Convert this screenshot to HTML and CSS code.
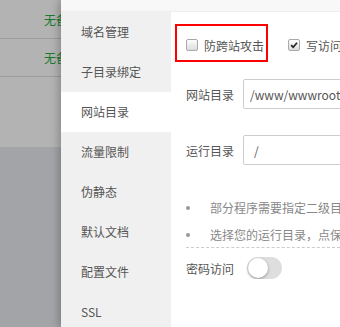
FILE: index.html
```html
<!DOCTYPE html>
<html lang="zh-CN">
<head>
  <meta charset="UTF-8" />
  <meta name="viewport" content="width=device-width, initial-scale=1" />
  <title>网站设置 • 网站目录</title>
  <link rel="stylesheet" href="styles.css">
</head>
<body>

  <!-- Страница под затемнением -->
  <div class="backdrop">
    <div class="bg-table">
      <div class="bg-row">无备份</div>
      <div class="bg-row">无备份</div>
    </div>
  </div>

  <!-- Окно настроек -->
  <div class="modal">
    <div class="modal-title"></div>
    <div class="modal-body">
      <ul class="side">
        <li>域名管理</li>
        <li>子目录绑定</li>
        <li class="active">网站目录</li>
        <li>流量限制</li>
        <li>伪静态</li>
        <li>默认文档</li>
        <li>配置文件</li>
        <li>SSL</li>
      </ul>

      <div class="content">
        <div class="mark"></div>

        <div class="check-row">
          <label class="check"><span class="cb"></span>防跨站攻击</label>
          <label class="check">
            <span class="cb checked">
              <svg viewBox="0 0 12 12" width="12" height="12"><path d="M2.6 6.2 L5 8.6 L9.6 3.2" fill="none" stroke="#222" stroke-width="2" /></svg>
            </span>写访问日志
          </label>
        </div>

        <div class="form-row">
          <span class="label">网站目录</span>
          <input class="text-input" type="text" value="/www/wwwroot/www.example.com" />
        </div>

        <div class="form-row second">
          <span class="label">运行目录</span>
          <input class="text-input run-dir" type="text" value="/" />
        </div>

        <ul class="tips">
          <li>部分程序需要指定二级目录作为运行目录，如ThinkPHP5，Laravel</li>
          <li>选择您的运行目录，点保存即可</li>
        </ul>

        <div class="pass-row">
          <span class="label">密码访问</span>
          <span class="switch"><span class="knob"></span></span>
        </div>
      </div>
    </div>
  </div>

</body>
</html>
```

FILE: styles.css
```css
/* --- Сброс --- */
* {
  margin: 0;
  padding: 0;
  box-sizing: border-box;
}
body {
  font-family: "Noto Sans CJK SC", "Noto Sans", sans-serif;
  font-size: 12px;
  color: #555;
  width: 340px;
  height: 327px;
  overflow: hidden;
  display: flex;
  background: #a3a4a8;
}
ul {
  list-style: none;
}

/* --- Затемнённая страница слева --- */
.backdrop {
  width: 61px;
  flex: none;
  overflow: hidden;
  background: #a3a4a8;
}
.bg-table {
  height: 147px;
  padding-top: 1px;
  background: #b3b3b3;
}
.bg-row {
  height: 38px;
  line-height: 37px;
  padding-left: 44px;
  border-bottom: 1px solid #9d9d9d;
  color: #187a2c;
  font-size: 12px;
  white-space: nowrap;
}

/* --- Окно --- */
.modal {
  flex: 1;
  display: flex;
  flex-direction: column;
  background: #fff;
  box-shadow: -2px 0 8px rgba(0,0,0,0.25);
  min-height: 0;
}
.modal-title {
  flex: none;
  height: 12px;
  background: #f8f8f8;
  border-bottom: 1px solid #eee;
}
.modal-body {
  flex: 1;
  min-height: 0;
  overflow: hidden;
  display: flex;
  align-items: flex-start;
}

/* --- Меню слева --- */
.side {
  width: 110px;
  flex: none;
  background: #f0f0f0;
}
.side li {
  height: 40px;
  line-height: 40px;
  padding-left: 20px;
  color: #555;
}
.side li.active {
  background: #fff;
}

/* --- Содержимое --- */
.content {
  flex: 1;
  position: relative;
  padding: 23px 0 0 15px;
  overflow: hidden;
  white-space: nowrap;
}
.mark {
  position: absolute;
  left: 4px;
  top: 12px;
  width: 93px;
  height: 38px;
  border: 2px solid #f00;
}

.check-row {
  display: flex;
  align-items: center;
  height: 20px;
}
.check {
  display: flex;
  align-items: center;
  color: #555;
}
.check + .check {
  margin-left: 24px;
}
.cb {
  width: 12px;
  height: 12px;
  margin-right: 6px;
  border: 1px solid #a9a9a9;
  border-radius: 2px;
  background: linear-gradient(#fdfdfd, #dcdcdc);
  display: flex;
  align-items: center;
  justify-content: center;
}
.cb svg {
  display: block;
}

.form-row {
  display: flex;
  align-items: center;
  height: 30px;
  margin-top: 24px;
}
.form-row.second {
  margin-top: 26px;
}
.label {
  width: 57px;
  flex: none;
  color: #555;
}
.text-input {
  width: 320px;
  flex: none;
  height: 30px;
  padding: 0 6px;
  border: 1px solid #ccc;
  border-radius: 2px;
  font-family: "Noto Sans CJK SC", "Noto Sans", sans-serif;
  font-size: 12px;
  color: #555;
  outline: none;
}
.text-input.run-dir {
  padding-left: 10px;
}

/* --- Подсказки --- */
.tips {
  margin-top: 31px;
  border-bottom: 1px dashed #ccc;
  width: 300px;
}
.tips li {
  display: flex;
  align-items: center;
  line-height: 24px;
  color: #888;
}
.tips li + li {
  margin-top: 3px;
}
.tips li::before {
  content: "";
  width: 4px;
  height: 4px;
  border-radius: 50%;
  background: #999;
  margin-right: 20px;
  flex: none;
}

/* --- Пароль --- */
.pass-row {
  display: flex;
  align-items: center;
  height: 22px;
  margin-top: 9px;
}
.pass-row .label {
  width: 48px;
  margin-right: 13px;
}
.switch {
  width: 35px;
  height: 22px;
  border-radius: 11px;
  background: #dedede;
  display: flex;
  align-items: center;
  padding: 0 1px;
}
.knob {
  width: 20px;
  height: 20px;
  border-radius: 50%;
  background: #fff;
  box-shadow: 0 1px 3px rgba(0,0,0,0.35);
}
```
